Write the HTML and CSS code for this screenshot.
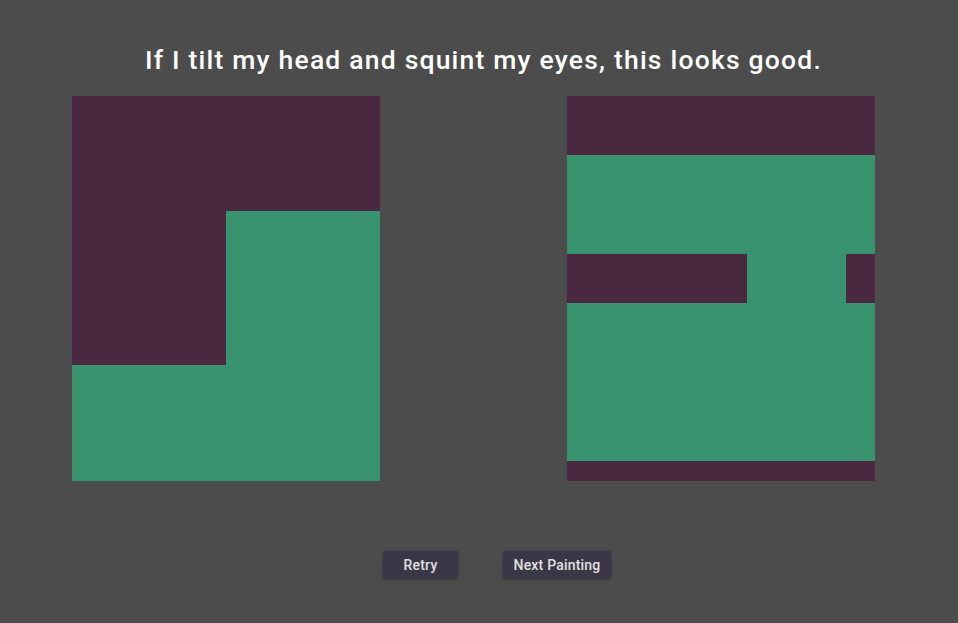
FILE: index.html
```html
<!DOCTYPE html>
<html>
<head>
<meta charset="utf-8">
<link rel="stylesheet" href="styles.css">
</head>
<body>
<div class="screen">
  <h1 class="title">If I tilt my head and squint my eyes, this looks good.</h1>
  <div class="paintings">
    <div class="painting painting-left">
      <div class="row-top purple"></div>
      <div class="row-mid">
        <div class="half purple"></div>
        <div class="half green"></div>
      </div>
      <div class="row-bottom green"></div>
    </div>
    <div class="painting painting-right">
      <div class="band purple b1"></div>
      <div class="band green b2"></div>
      <div class="band stripe b3">
        <div class="s purple s1"></div>
        <div class="s green s2"></div>
        <div class="s purple s3"></div>
      </div>
      <div class="band green b4"></div>
      <div class="band purple b5"></div>
    </div>
  </div>
  <div class="buttons">
    <button class="btn btn-retry">Retry</button>
    <button class="btn btn-next">Next Painting</button>
  </div>
</div>
</body>
</html>
```
FILE: styles.css
```css
html, body {
  margin: 0;
  padding: 0;
  background: #4c4c4c;
  width: 958px;
  height: 623px;
  overflow: hidden;
}
.screen {
  display: flex;
  flex-direction: column;
  font-family: Roboto, "Liberation Sans", sans-serif;
}
.title {
  margin: 0;
  height: 96px;
  padding-left: 9px;
  box-sizing: border-box;
  padding-top: 44px;
  text-align: center;
  color: #ffffff;
  font-size: 26.5px;
  font-weight: 500;
  letter-spacing: 1.2px;
  line-height: 32px;
}
.paintings {
  display: flex;
  padding-left: 72px;
  gap: 187px;
}
.painting {
  width: 308px;
  height: 385px;
  display: flex;
  flex-direction: column;
}
.purple { background: #4a283f; }
.green { background: #38936e; }
.row-top { height: 115px; }
.row-mid { height: 154px; display: flex; }
.half { width: 154px; }
.row-bottom { height: 116px; }
.b1 { height: 59px; }
.b2 { height: 99px; }
.b3 { height: 49px; display: flex; }
.b4 { height: 158px; }
.b5 { height: 20px; }
.s1 { width: 180px; }
.s2 { width: 99px; }
.s3 { width: 29px; }
.buttons {
  display: flex;
  padding-left: 383px;
  padding-top: 70px;
  gap: 45px;
}
.btn {
  height: 27px;
  border: none;
  border-radius: 2px;
  background: #3a3746;
  color: #e0e0e0;
  font-family: Roboto, "Liberation Sans", sans-serif;
  font-size: 14px;
  font-weight: 500;
  letter-spacing: 0.2px;
  padding: 0;
  box-shadow: 0 1px 3px rgba(0, 0, 0, 0.35);
}
.btn-retry { width: 75px; }
.btn-next { width: 108px; }
```
